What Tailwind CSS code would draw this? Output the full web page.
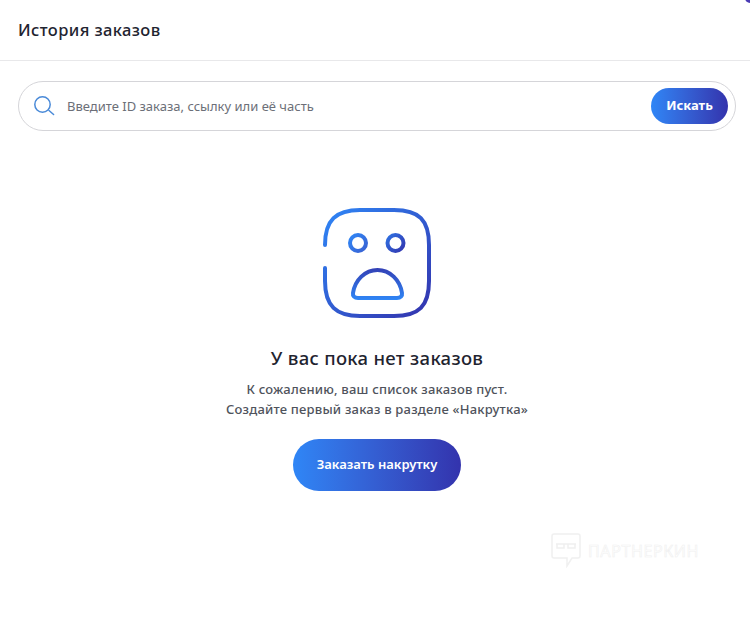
<!DOCTYPE html>
<html>
<head>
  <title>История заказов</title>
  <script src="https://cdn.jsdelivr.net/npm/@tailwindcss/browser@4"></script>
</head>
<body class="bg-white h-[617px] overflow-hidden relative font-['Noto_Sans','Open_Sans',sans-serif]">
  <!-- corner of the purple shape behind the modal -->
  <div class="absolute top-[-7px] right-[-7px] w-[12px] h-[10px] rounded-full bg-[#4b3bb5]"></div>

  <header class="h-[61px] border-b border-[#e8e8ea] pl-[18px] pt-[1px] flex items-center">
    <h1 class="text-[16.500px] font-medium text-[#1f2430] tracking-[0.4px]">История заказов</h1>
  </header>

  <main class="px-[18px] pr-[14px] pt-[20px]">
    <div class="h-[50px] rounded-[25px] border border-[#d5d5d9] flex items-center pl-[15px] pr-[7px]">
      <svg class="w-[22px] h-[22px] shrink-0" viewBox="0 0 22 22" fill="none" stroke="#4a8ad8" stroke-width="1.5" stroke-linecap="round">
        <circle cx="8.500" cy="9.500" r="7.700"/>
        <path d="M15 15.500l4.600 4"/>
      </svg>
      <span class="ml-[11px] pt-[1px] flex-1 text-[13px] text-[#6c6f78]">Введите ID заказа, ссылку или её часть</span>
      <button class="w-[77px] h-[36px] rounded-[18px] bg-linear-to-r from-[#2f86f6] to-[#3333ad] text-white text-[13px] font-bold">Искать</button>
    </div>

    <section class="flex flex-col items-center pt-[77px]">
      <svg class="w-[112px] h-[112px]" viewBox="0 0 112 112" fill="none" stroke-width="4" stroke-linecap="round" stroke-linejoin="round">
        <defs>
          <linearGradient id="sad" x1="0" y1="0" x2="1" y2="1">
            <stop offset="0" stop-color="#2f86f6"/>
            <stop offset="1" stop-color="#3333ad"/>
          </linearGradient>
          <linearGradient id="sadEyeLeft" gradientUnits="userSpaceOnUse" x1="28" y1="28" x2="46" y2="44">
            <stop offset="0" stop-color="#2f86f6"/>
            <stop offset="1" stop-color="#3a5fd0"/>
          </linearGradient>
          <linearGradient id="sadEyeRight" gradientUnits="userSpaceOnUse" x1="66" y1="28" x2="84" y2="44">
            <stop offset="0" stop-color="#2f6fe0"/>
            <stop offset="1" stop-color="#3333ad"/>
          </linearGradient>
          <linearGradient id="sadMouth" gradientUnits="userSpaceOnUse" x1="56" y1="92" x2="56" y2="60">
            <stop offset="0" stop-color="#2f86f6"/>
            <stop offset="1" stop-color="#3340b5"/>
          </linearGradient>
        </defs>
        <path stroke="url(#sad)" d="M4 37C4 12 15 2 39 2H73C98 2 108 12 108 37V73C108 98 98 108 73 108H39C15 108 4 98 4 73V60"/>
        <circle stroke="url(#sadEyeLeft)" cx="37" cy="35" r="8"/>
        <circle stroke="url(#sadEyeRight)" cx="74.500" cy="35" r="8"/>
        <path stroke="url(#sadMouth)" d="M37 90H76C79.500 90 81.500 88 81 85C79 72 69 62 56.500 62C44 62 34 72 32 85C31.500 88 33.500 90 37 90Z"/>
      </svg>
      <h2 class="mt-[24px] text-[18.500px] leading-[27px] font-medium text-[#1f2430] tracking-[0.3px]">У вас пока нет заказов</h2>
      <p class="mt-[8px] text-[13px] leading-[20px] font-medium text-[#4f535c] text-center tracking-[0.2px]">К сожалению, ваш список заказов пуст.<br>Создайте первый заказ в разделе «Накрутка»</p>
      <button class="mt-[20px] w-[168px] h-[52px] rounded-[26px] bg-linear-to-r from-[#2f86f6] to-[#3333ad] text-white text-[13px] font-semibold">Заказать накрутку</button>
    </section>
  </main>

  <!-- faint watermark over the empty area -->
  <div class="absolute left-[551px] top-[533px] flex items-center gap-[7px]">
    <svg class="w-[30px] h-[35px]" viewBox="0 0 30 35" fill="none" stroke="#f0f0f0" stroke-width="1.500">
      <path d="M3 1H27C28 1 29 2 29 3V23C29 24 28 25 27 25H21L16 33V25H3C2 25 1 24 1 23V3C1 2 2 1 3 1Z"/>
      <path d="M5 11H25M6 11V15H13V11M17 11V15H24V11"/>
    </svg>
    <span class="text-[16px] font-normal text-white tracking-[0.6px] [-webkit-text-stroke:0.6px_#f0f0f0]">ПАРТНЕРКИН</span>
  </div>
</body>
</html>
